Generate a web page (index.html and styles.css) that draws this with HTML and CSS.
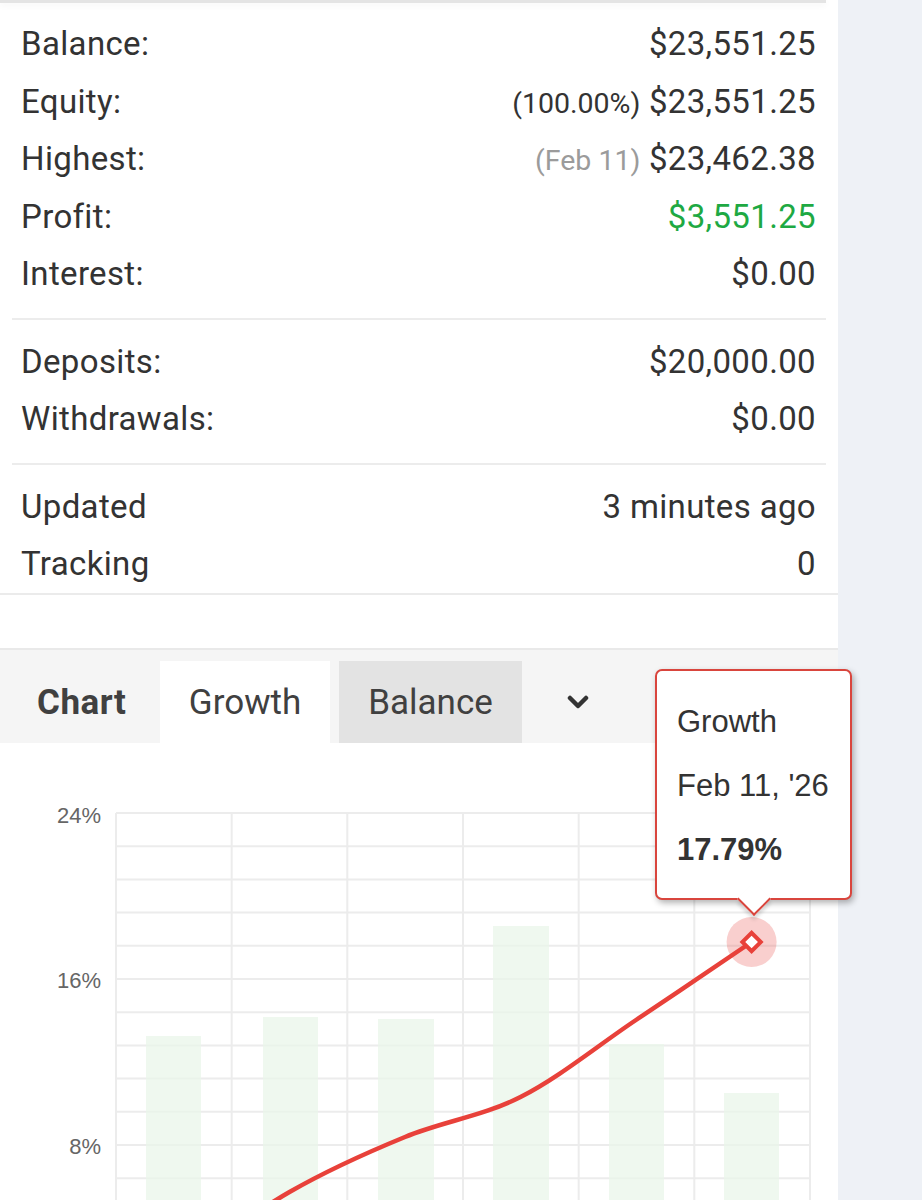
FILE: index.html
```html
<!DOCTYPE html>
<html lang="en">
<head>
<meta charset="utf-8">
<title>Account</title>
<link rel="stylesheet" href="styles.css">
</head>
<body>
<div class="page">
  <main class="panel">
    <div class="card-edge"></div>
    <section class="stats">
      <div class="group">
        <div class="row"><span class="label">Balance:</span><span class="value">$23,551.25</span></div>
        <div class="row"><span class="label">Equity:</span><span class="value"><span class="note">(100.00%)</span> $23,551.25</span></div>
        <div class="row"><span class="label">Highest:</span><span class="value"><span class="note muted">(Feb 11)</span> $23,462.38</span></div>
        <div class="row"><span class="label">Profit:</span><span class="value positive">$3,551.25</span></div>
        <div class="row"><span class="label">Interest:</span><span class="value">$0.00</span></div>
      </div>
      <div class="group">
        <div class="row"><span class="label">Deposits:</span><span class="value">$20,000.00</span></div>
        <div class="row"><span class="label">Withdrawals:</span><span class="value">$0.00</span></div>
      </div>
      <div class="group">
        <div class="row"><span class="label">Updated</span><span class="value">3 minutes ago</span></div>
        <div class="row"><span class="label">Tracking</span><span class="value">0</span></div>
      </div>
    </section>
    <div class="spacer"></div>
    <section class="chart-block">
      <div class="tabs">
        <div class="tab-label">Chart</div>
        <div class="tab active">Growth</div>
        <div class="tab selected">Balance</div>
        <div class="tab-more">
          <svg width="22" height="14" viewBox="0 0 22 14"><path d="M3 3 L11 11 L19 3" fill="none" stroke="#333" stroke-width="4.5" stroke-linecap="round" stroke-linejoin="round"/></svg>
        </div>
      </div>
      <svg class="chart" width="838" height="570" viewBox="0 0 838 570">
        <g stroke="#ececec" stroke-width="2">
          <line x1="116" y1="68" x2="810" y2="68"/>
          <line x1="116" y1="101.2" x2="810" y2="101.2"/>
          <line x1="116" y1="134.4" x2="810" y2="134.4"/>
          <line x1="116" y1="167.6" x2="810" y2="167.6"/>
          <line x1="116" y1="200.8" x2="810" y2="200.8"/>
          <line x1="116" y1="234" x2="810" y2="234"/>
          <line x1="116" y1="267.2" x2="810" y2="267.2"/>
          <line x1="116" y1="300.4" x2="810" y2="300.4"/>
          <line x1="116" y1="333.6" x2="810" y2="333.6"/>
          <line x1="116" y1="366.8" x2="810" y2="366.8"/>
          <line x1="116" y1="400" x2="810" y2="400"/>
          <line x1="116" y1="433.2" x2="810" y2="433.2"/>
          <line x1="116" y1="466.4" x2="810" y2="466.4"/>
          <line x1="116" y1="499.6" x2="810" y2="499.6"/>
          <line x1="116" y1="532.8" x2="810" y2="532.8"/>
          <line x1="116" y1="566" x2="810" y2="566"/>
          <line x1="116" y1="68" x2="116" y2="566"/>
          <line x1="231.7" y1="68" x2="231.7" y2="566"/>
          <line x1="347.3" y1="68" x2="347.3" y2="566"/>
          <line x1="463" y1="68" x2="463" y2="566"/>
          <line x1="578.7" y1="68" x2="578.7" y2="566"/>
          <line x1="694.3" y1="68" x2="694.3" y2="566"/>
          <line x1="810" y1="68" x2="810" y2="566"/>
        </g>
        <g fill="#e9f5ea" fill-opacity="0.75">
          <rect x="146" y="291" width="55" height="275"/>
          <rect x="263" y="272" width="55" height="294"/>
          <rect x="378" y="274" width="56" height="292"/>
          <rect x="493" y="181" width="56" height="385"/>
          <rect x="609" y="299" width="55" height="267"/>
          <rect x="724" y="348" width="55" height="218"/>
        </g>
        <g class="axis">
          <text x="101" y="78">24%</text>
          <text x="101" y="243">16%</text>
          <text x="101" y="409">8%</text>
        </g>
        <path d="M174 524 C193.3 511.2 251 469 289.5 447 C328 425 366.5 407.8 405 392 C443.5 376.2 482 371.5 520.5 352 C559 332.5 597.5 300.8 636 275 C674.5 249.2 732.3 210 751.6 197" fill="none" stroke="#e8413a" stroke-width="4.5" stroke-linecap="round"/>
        <circle cx="751.6" cy="197" r="25" fill="#e8413a" fill-opacity="0.25"/>
        <rect x="745.1" y="190.5" width="13" height="13" fill="#fff" stroke="#e8413a" stroke-width="4" transform="rotate(45 751.6 197)"/>
      </svg>
      <div class="tooltip">
        <div class="tip-line">Growth</div>
        <div class="tip-line">Feb 11, '26</div>
        <div class="tip-line strong">17.79%</div>
      </div>
    </section>
  </main>
  <aside class="side"></aside>
</div>
</body>
</html>
```

FILE: styles.css
```css
html, body {
  margin: 0;
  padding: 0;
  background: #eef1f6;
}

body {
  font-family: Roboto, "Noto Sans", "Liberation Sans", sans-serif;
  color: #333;
}

.page {
  display: flex;
  width: 922px;
  min-height: 1200px;
  overflow: hidden;
}

.panel {
  width: 838px;
  flex: none;
  background: #fff;
}

.side {
  flex: 1;
  background: #eef1f6;
}

.card-edge {
  height: 3px;
  margin-right: 12px;
  background: #e4e4e4;
  box-shadow: 0 2px 7px rgba(0, 0, 0, 0.06);
}

.stats {
  border-bottom: 2px solid #ebebeb;
}

.group {
  margin: 0 12px;
  padding: 13px 0 15px;
  border-bottom: 2px solid #ececec;
}

.group:first-child {
  padding-top: 12px;
}

.group:last-child {
  border-bottom: none;
  padding-bottom: 0;
}

.row {
  height: 57.5px;
  display: flex;
  align-items: center;
  justify-content: space-between;
  padding: 0 10px 0 9px;
  font-size: 33px;
  letter-spacing: 0.35px;
  color: #333;
}

.value {
  white-space: nowrap;
}

.note {
  font-size: 28.5px;
  letter-spacing: 0;
}

.muted {
  color: #9b9b9b;
}

.positive {
  color: #1ea943;
}

.spacer {
  height: 53.5px;
}

.chart-block {
  position: relative;
}

.tabs {
  display: flex;
  align-items: stretch;
  box-sizing: border-box;
  height: 95px;
  padding-top: 11px;
  border-top: 2px solid #e9e9e9;
  background: #f5f5f5;
  font-size: 35px;
  color: #404040;
}

.tab-label {
  width: 160px;
  box-sizing: border-box;
  padding-left: 37px;
  display: flex;
  align-items: center;
  font-weight: 700;
  letter-spacing: 0.5px;
}

.tab {
  display: flex;
  align-items: center;
  justify-content: center;
}

.tab.active {
  width: 170px;
  background: #fff;
  margin-right: 9px;
}

.tab.selected {
  width: 183px;
  background: #e3e3e3;
}

.tab-more {
  display: flex;
  align-items: center;
  margin-left: 45px;
}

.chart {
  display: block;
  margin-top: 2px;
}

.axis text {
  font-family: "Liberation Sans", Arial, sans-serif;
  font-size: 22px;
  fill: #666;
  text-anchor: end;
}

.tooltip {
  position: absolute;
  left: 655px;
  top: 21px;
  width: 197px;
  height: 231px;
  box-sizing: border-box;
  padding: 19px 0 0 20px;
  background: #fff;
  border: 2px solid #d9453d;
  border-radius: 7px;
  box-shadow: 2px 3px 6px rgba(0, 0, 0, 0.3);
  font-family: "Liberation Sans", Arial, sans-serif;
  font-size: 31px;
  color: #333;
}

.tooltip::after {
  content: "";
  position: absolute;
  left: 50%;
  bottom: -13px;
  width: 22px;
  height: 22px;
  margin-left: -12px;
  background: #fff;
  border-right: 2px solid #d9453d;
  border-bottom: 2px solid #d9453d;
  transform: rotate(45deg);
  box-shadow: 3px 3px 4px rgba(0, 0, 0, 0.15);
}

.tip-line {
  line-height: 64px;
  height: 64px;
  white-space: nowrap;
}

.tip-line.strong {
  font-weight: 700;
}
```
